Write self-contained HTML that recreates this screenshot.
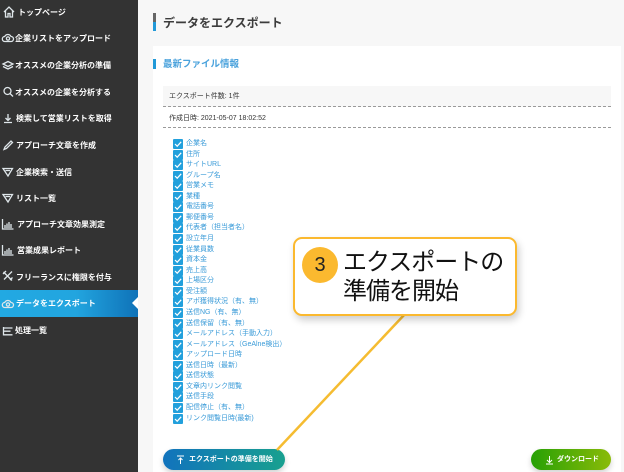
<!DOCTYPE html>
<html lang="ja"><head><meta charset="utf-8">
<style>
*{box-sizing:border-box}
html,body{margin:0;padding:0}
body{width:624px;height:472px;overflow:hidden;position:relative;background:#f7f7f7;font-family:"Liberation Sans","Noto Sans CJK JP",sans-serif}
.a{position:absolute}
#side{left:0;top:0;width:138px;height:472px;background:#333}
.m{position:absolute;left:15px;color:#fff;font-size:8px;font-weight:700;line-height:12px;white-space:nowrap;height:12px;margin-top:1px}
.i{position:absolute;left:2px;width:12px;height:12px;overflow:visible}
.i *{fill:none;stroke:#dfe6ea;stroke-width:1.3}
#act{left:0;top:290px;width:138px;height:27px;background:linear-gradient(90deg,#22a9e2 0%,#22a5df 55%,#0f72b8 100%)}
#act:after{content:"";position:absolute;right:0;top:7px;border:6.5px solid transparent;border-right:6px solid #fff;border-left:0}
#panel{left:153px;top:46px;width:468px;height:426px;background:#fff}
.c{position:absolute;left:173px;width:10px;height:10px;background:#22a0dc;border-radius:1px}
.c svg{position:absolute;left:0;top:0;width:10px;height:10px}
.l{position:absolute;left:186px;font-size:7px;line-height:10px;color:#3a9bd8;white-space:nowrap;font-weight:400}
.btn{position:absolute;height:21px;border-radius:11px;color:#fff;font-size:7px;font-weight:700;line-height:21px;text-align:center;box-shadow:0 3px 6px rgba(0,0,0,.18);white-space:nowrap}
</style></head><body>
<div class="a" id="side"></div>
<div class="a" id="act"></div>

<svg class="i" style="top:6px;left:3px" viewBox="0 0 12 12"><path d="M1 6 6 1l5 5M2.500 5v6h2.500V7.500h2V11h2.500V5"/></svg>
<div class="m" style="top:6px;left:18px">トップページ</div>
<svg class="i" style="top:32px" viewBox="0 0 12 12"><path d="M3 9.500a2.500 2.500 0 0 1-.3-5A3.500 3.500 0 0 1 9 4.500a2.500 2.500 0 0 1 0 5Z"/><circle cx="6" cy="6.500" r="1.600"/></svg>
<div class="m" style="top:32px">企業リストをアップロード</div>
<svg class="i" style="top:59px" viewBox="0 0 12 12"><path d="M1 5 6 2.500 11 5 6 7.500Z"/><path d="M1 7.500 6 10 11 7.500"/></svg>
<div class="m" style="top:59px">オススメの企業分析の準備</div>
<svg class="i" style="top:86px;left:2px" viewBox="0 0 12 12"><circle cx="5.500" cy="5" r="3.500"/><path d="m8 7.500 3 3"/></svg>
<div class="m" style="top:86px">オススメの企業を分析する</div>
<svg class="i" style="top:112px;left:2px" viewBox="0 0 12 12"><path d="M6 2v6M3.500 6 6 8.500 8.500 6M2 10.500h8"/></svg>
<div class="m" style="top:112px;left:16px">検索して営業リストを取得</div>
<svg class="i" style="top:139px;left:2px" viewBox="0 0 12 12"><path d="M2 10.500 3 8l6-6 1.500 1.500-6 6Z"/></svg>
<div class="m" style="top:139px;left:16px">アプローチ文章を作成</div>
<svg class="i" style="top:166px;left:2px" viewBox="0 0 12 12"><path d="M1 2.500h9.500L6 10Z"/><path d="M3.500 4.500h4.500"/></svg>
<div class="m" style="top:166px;left:16px">企業検索・送信</div>
<svg class="i" style="top:192px;left:2px" viewBox="0 0 12 12"><path d="M1 2.500h9.500L6 10Z"/><path d="M3.500 4.500h4.500"/></svg>
<div class="m" style="top:192px;left:16px">リスト一覧</div>
<svg class="i" style="top:218px" viewBox="0 0 12 12"><path d="M.500 1v10h11M3 10V7M5 10V5.500M7 10V4M9 10V6" stroke-width="1.200"/></svg>
<div class="m" style="top:218px;left:17px">アプローチ文章効果測定</div>
<svg class="i" style="top:244px" viewBox="0 0 12 12"><path d="M.500 1v10h11M3 10V7M5 10V5.500M7 10V4M9 10V6" stroke-width="1.200"/></svg>
<div class="m" style="top:244px;left:17px">営業成果レポート</div>
<svg class="i" style="top:270px;left:2px" viewBox="0 0 12 12"><path d="m1.500 2 8.500 8.500M10 1.500 2 9.500M1 4l3-3M8 10l2.500-2.500"/></svg>
<div class="m" style="top:271px;left:16px">フリーランスに権限を付与</div>
<svg class="i" style="top:298px" viewBox="0 0 12 12"><path d="M3 9.500a2.500 2.500 0 0 1-.3-5A3.500 3.500 0 0 1 9 4.500a2.500 2.500 0 0 1 0 5Z"/><circle cx="6" cy="6.500" r="1.600"/></svg>
<div class="m" style="top:297px;left:16px">データをエクスポート</div>
<svg class="i" style="top:325px;left:2px" viewBox="0 0 12 12"><path d="M1.500 2v8.500M1.500 3h9M1.500 6.200h7M1.500 9.800h9"/></svg>
<div class="m" style="top:324px;left:15px">処理一覧</div>

<div class="a" style="left:153px;top:13px;width:3px;height:18px;background:linear-gradient(180deg,#666 0 50%,#2199d8 50% 100%)"></div>
<div class="a" style="left:163px;top:15px;font-size:12px;font-weight:700;line-height:16px;color:#3c3c3c;white-space:nowrap">データをエクスポート</div>

<div class="a" id="panel"></div>
<div class="a" style="left:153px;top:59px;width:3px;height:10px;background:#2199d8"></div>
<div class="a" style="left:163px;top:58px;font-size:9.500px;font-weight:700;line-height:14px;color:#4aa2dc;white-space:nowrap">最新ファイル情報</div>

<div class="a" style="left:163px;top:86px;width:448px;height:21px;background:#f7f7f7;border-bottom:1px dashed #9a9a9a"></div>
<div class="a" style="left:169px;top:91px;font-size:7px;line-height:11px;color:#333;white-space:nowrap">エクスポート件数: 1件</div>
<div class="a" style="left:163px;top:107px;width:448px;height:21px;border-bottom:1px dashed #9a9a9a"></div>
<div class="a" style="left:169px;top:113px;font-size:7px;line-height:11px;color:#333;white-space:nowrap">作成日時: 2021-05-07 18:02:52</div>

<div id="checks"></div>

<div class="btn" style="left:163px;top:449px;width:122px;background:linear-gradient(90deg,#1173bd,#18a08f)"><svg style="position:absolute;left:13px;top:6px" width="9" height="10" viewBox="0 0 9 10"><path d="M1 1h7M4.500 9V3M2.500 5l2-2 2 2" fill="none" stroke="#fff" stroke-width="1"/></svg><span style="position:absolute;left:26px">エクスポートの準備を開始</span></div>
<div class="btn" style="left:531px;top:449px;width:80px;background:linear-gradient(90deg,#27a006,#8abb08)"><svg style="position:absolute;left:14px;top:6px" width="9" height="10" viewBox="0 0 9 10"><path d="M4.500 1v6M2 5l2.500 2.500L7 5M1 9h7" fill="none" stroke="#fff" stroke-width="1"/></svg><span style="position:absolute;left:26px">ダウンロード</span></div>

<svg class="a" style="left:270px;top:310px" width="150" height="145" viewBox="0 0 150 145"><path d="M135 4 7 140" stroke="#f5bc31" stroke-width="2.500" fill="none"/></svg>
<div class="a" style="left:293px;top:237px;width:224px;height:79px;background:#fff;border:2.500px solid #fbb92f;border-radius:9px;box-shadow:2px 4px 8px rgba(0,0,0,.2)"></div>
<div class="a" style="left:302px;top:247px;width:36px;height:36px;border-radius:50%;background:#fbb92f;color:#222;font-size:20px;line-height:36px;text-align:center">3</div>
<div class="a" style="left:343px;top:248px;width:170px;font-size:24px;line-height:29px;color:#111;white-space:nowrap;letter-spacing:-1px">エクスポートの<br>準備を開始</div>

<script>
var n=["企業名","住所","サイトURL","グループ名","営業メモ","業種","電話番号","郵便番号","代表者（担当者名）","設立年月","従業員数","資本金","売上高","上場区分","受注額","アポ獲得状況（有、無）","送信NG（有、無）","送信保留（有、無）","メールアドレス（手動入力）","メールアドレス（GeAlne検出）","アップロード日時","送信日時（最新）","送信状態","文章内リンク閲覧","送信手段","配信停止（有、無）","リンク閲覧日時(最新)"],h="";
n.forEach(function(t,i){var y=Math.round(139+i*10.56);
h+='<div class="c" style="top:'+y+'px"><svg viewBox="0 0 10 10"><path d="M2 5l2.200 2.200L8.200 2.800" fill="none" stroke="#fff" stroke-width="1.200"/></svg></div><div class="l" style="top:'+y+'px">'+t+'</div>';});
document.getElementById("checks").innerHTML=h;
</script>
</body></html>
